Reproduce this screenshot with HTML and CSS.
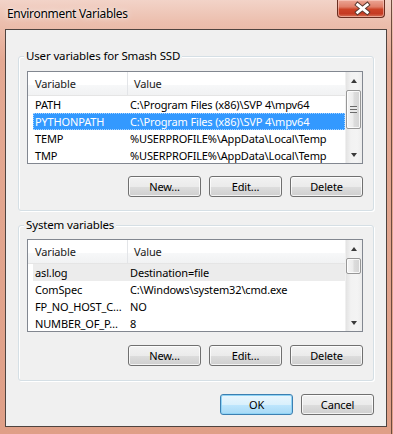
FILE: index.html
```html
<!DOCTYPE html>
<html lang="en">
<head>
<meta charset="utf-8">
<title>Environment Variables</title>
<link rel="stylesheet" href="styles.css">
</head>
<body>
<div class="window">
  <div class="titlebar">
    <span class="title">Environment Variables</span>
    <button class="close" aria-label="Close">
      <svg width="48" height="18" viewBox="0 0 48 18">
        <path d="M20.5 4.5 L30.5 12.5 M30.5 4.5 L20.5 12.5" stroke="#5a3a32" stroke-width="5" stroke-linecap="square" fill="none"/>
        <path d="M20.5 4.5 L30.5 12.5 M30.5 4.5 L20.5 12.5" stroke="#ffffff" stroke-width="3" stroke-linecap="square" fill="none"/>
      </svg>
    </button>
  </div>
  <div class="client">
    <section class="group">
      <div class="group-label">User variables for Smash SSD</div>
      <div class="list">
        <div class="list-body">
          <div class="list-head"><span class="h1">Variable</span><span class="h2">Value</span></div>
          <div class="row"><span class="c1">PATH</span><span class="c2">C:\Program Files (x86)\SVP 4\mpv64</span></div>
          <div class="row selected"><span class="c1">PYTHONPATH</span><span class="c2">C:\Program Files (x86)\SVP 4\mpv64</span></div>
          <div class="row"><span class="c1">TEMP</span><span class="c2">%USERPROFILE%\AppData\Local\Temp</span></div>
          <div class="row"><span class="c1">TMP</span><span class="c2">%USERPROFILE%\AppData\Local\Temp</span></div>
        </div>
        <div class="scrollbar">
          <div class="sb-btn up"></div>
          <div class="sb-track"><div class="thumb thumb-user"><span class="grip"></span></div></div>
          <div class="sb-btn down"></div>
        </div>
      </div>
      <div class="buttons">
        <button class="btn">New...</button>
        <button class="btn">Edit...</button>
        <button class="btn">Delete</button>
      </div>
    </section>

    <section class="group group-sys">
      <div class="group-label">System variables</div>
      <div class="list">
        <div class="list-body">
          <div class="list-head"><span class="h1">Variable</span><span class="h2">Value</span></div>
          <div class="row inactive"><span class="c1">asl.log</span><span class="c2">Destination=file</span></div>
          <div class="row"><span class="c1">ComSpec</span><span class="c2">C:\Windows\system32\cmd.exe</span></div>
          <div class="row"><span class="c1">FP_NO_HOST_C…</span><span class="c2">NO</span></div>
          <div class="row"><span class="c1">NUMBER_OF_P…</span><span class="c2">8</span></div>
        </div>
        <div class="scrollbar">
          <div class="sb-btn up"></div>
          <div class="sb-track"><div class="thumb thumb-sys"></div></div>
          <div class="sb-btn down"></div>
        </div>
      </div>
      <div class="buttons">
        <button class="btn">New...</button>
        <button class="btn">Edit...</button>
        <button class="btn">Delete</button>
      </div>
    </section>

    <div class="dialog-buttons">
      <button class="btn btn-default">OK</button>
      <button class="btn">Cancel</button>
    </div>
  </div>
</div>
</body>
</html>
```

FILE: styles.css
```css
* { box-sizing: border-box; }

html, body {
  margin: 0;
  padding: 0;
}

body {
  width: 393px;
  height: 434px;
  overflow: hidden;
  font-family: "Noto Sans", "Open Sans", sans-serif;
  font-size: 11px;
  letter-spacing: -0.15px;
  color: #000;
  background: linear-gradient(180deg, #f2d3c8 0px, #ecbfae 22px, #e4a993 60px, #df9f87 100%);
}

.window {
  width: 392px;
  height: 434px;
  display: flex;
  flex-direction: column;
  padding: 0 4px 0 5px;
  border-right: 1px solid #6e4b3f;
}

.titlebar {
  height: 29px;
  display: flex;
  justify-content: space-between;
  align-items: flex-start;
}

.title {
  padding: 6px 0 0 2px;
  font-size: 12px;
  letter-spacing: -0.3px;
  line-height: 16px;
  text-shadow: 0 0 6px rgba(255, 255, 255, 0.9), 0 0 2px rgba(255, 255, 255, 0.9);
}

.close {
  width: 48px;
  height: 18px;
  margin: 0 2px 0 0;
  padding: 0;
  border: 1px solid #6a2d20;
  border-top: none;
  border-radius: 0 0 4px 4px;
  background: linear-gradient(180deg, #eba595 0%, #e07f69 40%, #cc4327 55%, #c53a22 80%, #d77459 100%);
  box-shadow: inset 0 0 0 1px rgba(255, 220, 210, 0.5);
  display: flex;
}

.client {
  flex: 1;
  margin-bottom: 7px;
  border: 1px solid #4f4440;
  background: #f0f0f0;
  padding: 26px 12px 0 12px;
  display: flex;
  flex-direction: column;
}

.group {
  position: relative;
  border: 1px solid #d5dfe5;
  border-radius: 3px;
  box-shadow: 1px 1px 0 #ffffff, inset 1px 1px 0 #ffffff;
  padding: 14px 10px 13px 8px;
}

.group-sys {
  margin-top: 14px;
  padding-top: 13px;
  padding-bottom: 14px;
}

.group-label {
  position: absolute;
  top: -9px;
  left: 5px;
  padding: 0 2px;
  line-height: 16px;
  font-size: 11.5px;
  background: #f0f0f0;
}

.list {
  height: 93px;
  border: 1px solid #828790;
  background: #ffffff;
  display: flex;
}

.list-body {
  flex: 1;
  overflow: hidden;
  min-width: 0;
}

.list-head {
  height: 24px;
  display: flex;
  border-bottom: 1px solid #e5e5e5;
  background: linear-gradient(180deg, #ffffff 0%, #ffffff 55%, #f7f8f9 56%, #f1f2f3 100%);
  line-height: 23px;
  color: #1a1a1a;
}

.h1 {
  width: 100px;
  padding-left: 7px;
  border-right: 1px solid #e3e5e8;
}

.h2 {
  padding-left: 6px;
}

.row {
  display: flex;
  height: 17px;
  line-height: 17px;
  margin-left: 5px;
  white-space: nowrap;
}

.c1 {
  width: 95px;
  flex: none;
  padding-left: 2px;
  overflow: hidden;
}

.c2 {
  padding-left: 2px;
}

.row.selected {
  background: #3399ff;
  color: #ffffff;
  outline: 1px dotted #a8d3ff;
  outline-offset: -1px;
}

.row.inactive {
  background: #ececec;
}

.scrollbar {
  width: 17px;
  flex: none;
  display: flex;
  flex-direction: column;
  background: linear-gradient(90deg, #e3e3e3 0%, #f2f2f2 30%, #f4f4f4 70%, #ececec 100%);
  border-left: 1px solid #f0f0f0;
}

.sb-btn {
  height: 17px;
  flex: none;
  display: flex;
  align-items: center;
  justify-content: center;
}

.sb-btn::after {
  content: "";
  width: 0;
  height: 0;
  border-left: 3.5px solid transparent;
  border-right: 3.5px solid transparent;
}

.up::after {
  border-bottom: 4px solid #3a3a3a;
}

.down::after {
  border-top: 4px solid #3a3a3a;
}

.sb-track {
  flex: 1;
  padding: 1px 0 0 0;
}

.thumb {
  margin: 0 1px 0 0;
  border: 1px solid #979797;
  border-radius: 2px;
  background: linear-gradient(90deg, #f5f5f5 0%, #ececec 45%, #dcdcdc 55%, #d4d4d4 100%);
  box-shadow: inset 0 0 0 1px rgba(255, 255, 255, 0.8);
  display: flex;
  align-items: center;
  justify-content: center;
}

.thumb-user {
  height: 39px;
}

.thumb-sys {
  height: 16px;
}

.grip {
  width: 7px;
  height: 7px;
  background: repeating-linear-gradient(180deg, #6b6b6b 0px, #6b6b6b 1px, #e8e8e8 1px, #e8e8e8 3px);
}

.buttons,
.dialog-buttons {
  display: flex;
  justify-content: flex-end;
  gap: 8px;
}

.buttons {
  margin-top: 12px;
}

.group-sys .buttons {
  margin-top: 13px;
}

.dialog-buttons {
  margin-top: 13px;
}

.btn {
  width: 73px;
  height: 21px;
  padding: 0;
  font: inherit;
  letter-spacing: inherit;
  line-height: 19px;
  color: #000;
  border: 1px solid #707070;
  border-radius: 3px;
  background: linear-gradient(180deg, #f2f2f2 0%, #ebebeb 50%, #dddddd 51%, #cfcfcf 100%);
  box-shadow: inset 0 0 0 1px rgba(255, 255, 255, 0.75);
}

.btn-default {
  border-color: #3c7fb1;
  background: linear-gradient(180deg, #eaf6fd 0%, #d9f0fc 50%, #bee6fd 51%, #a7d9f5 100%);
  box-shadow: inset 0 0 0 1px #8fd3f5;
}
```
